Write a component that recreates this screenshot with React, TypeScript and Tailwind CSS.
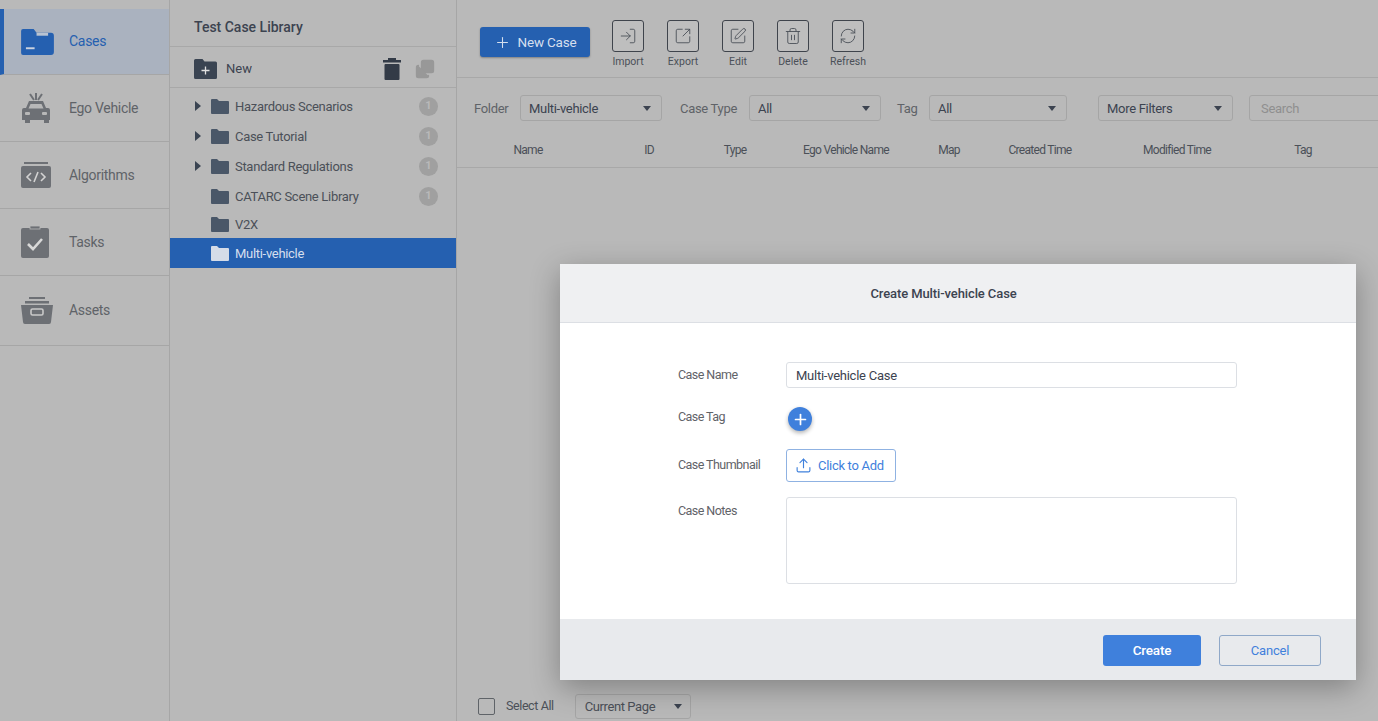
import { Copy, Plus, RefreshCw, SquareArrowOutUpRight, SquarePen, Trash2, Upload, LogIn } from 'lucide-react';
import type { ReactNode } from 'react';

const navItems: { label: string; icon: ReactNode; active?: boolean; height: string }[] = [
  {
    label: 'Cases',
    active: true,
    height: 'h-[66px]',
    icon: (
      <svg width="33" height="27" viewBox="0 0 34 28">
        <path d="M2 1h11l3 4h15a3 3 0 0 1 3 3v17a3 3 0 0 1-3 3H2a2 2 0 0 1-2-2V3a2 2 0 0 1 2-2z" fill="#2560b0" />
        <rect x="16" y="5" width="12" height="3" fill="#b9c3d2" />
        <rect x="5" y="20" width="9" height="2" fill="#c9d2df" />
      </svg>
    ),
  },
  {
    label: 'Ego Vehicle',
    height: 'h-[67px]',
    icon: (
      <svg width="30" height="32" viewBox="0 0 30 32" fill="#6d7075">
        <path d="M15 1v7M9 2l4 6M21 2l-4 6" stroke="#6d7075" strokeWidth="2" />
        <path d="M8 9h14l3 7h2a2 2 0 0 1 2 2v10h-1v3h-5v-3H9v3H4v-3H1V18a2 2 0 0 1 2-2h2z" />
        <path d="M9.5 12h11l2 4.5h-15z" fill="#b8b8b8" />
        <rect x="4" y="20" width="5" height="3" rx="1" fill="#b8b8b8" />
        <rect x="21" y="20" width="5" height="3" rx="1" fill="#b8b8b8" />
      </svg>
    ),
  },
  {
    label: 'Algorithms',
    height: 'h-[67px]',
    icon: (
      <svg width="30" height="26" viewBox="0 0 30 26" fill="#6d7075">
        <rect x="3" y="0" width="24" height="2" />
        <rect x="0" y="4" width="30" height="22" rx="2" />
        <path d="M10 11l-4 4 4 4M20 11l4 4-4 4M17 10l-4 10" fill="none" stroke="#d3d3d3" strokeWidth="1.6" />
      </svg>
    ),
  },
  {
    label: 'Tasks',
    height: 'h-[67px]',
    icon: (
      <svg width="28" height="32" viewBox="0 0 28 32" fill="#6d7075">
        <rect x="0" y="2" width="28" height="30" rx="2" />
        <rect x="9" y="0" width="10" height="3" fill="#6d7075" stroke="#b8b8b8" strokeWidth="0.8" />
        <path d="M7 18l5 5 9-10" fill="none" stroke="#d8d8d8" strokeWidth="2.6" />
      </svg>
    ),
  },
  {
    label: 'Assets',
    height: 'h-[70px]',
    icon: (
      <svg width="32" height="27" viewBox="0 0 32 27" fill="#6d7075">
        <rect x="8" y="0" width="16" height="2" />
        <rect x="4" y="4" width="24" height="2.5" />
        <path d="M0 8h32l-2 17a2 2 0 0 1-2 2H4a2 2 0 0 1-2-2z" />
        <rect x="10" y="12" width="12" height="6" rx="1.5" fill="none" stroke="#c9c9c9" strokeWidth="1.6" />
      </svg>
    ),
  },
];

const folders = [
  { name: 'Hazardous Scenarios', arrow: true, count: true, rowH: 'h-[30px]' },
  { name: 'Case Tutorial', arrow: true, count: true, rowH: 'h-[30px]' },
  { name: 'Standard Regulations', arrow: true, count: true, rowH: 'h-[30px]' },
  { name: 'CATARC Scene Library', arrow: false, count: true, rowH: 'h-[30px]' },
  { name: 'V2X', arrow: false, count: false, rowH: 'h-[27px]' },
  { name: 'Multi-vehicle', arrow: false, count: false, rowH: 'h-[30px]', selected: true },
];

const tools = [
  { label: 'Import', Icon: LogIn },
  { label: 'Export', Icon: SquareArrowOutUpRight },
  { label: 'Edit', Icon: SquarePen },
  { label: 'Delete', Icon: Trash2 },
  { label: 'Refresh', Icon: RefreshCw },
];

const columns = [
  { label: 'Name', w: 'w-[142px]' },
  { label: 'ID', w: 'w-[100px]' },
  { label: 'Type', w: 'w-[72px]' },
  { label: 'Ego Vehicle Name', w: 'w-[150px]' },
  { label: 'Map', w: 'w-[56px]' },
  { label: 'Created Time', w: 'w-[126px]' },
  { label: 'Modified Time', w: 'w-[148px]' },
  { label: 'Tag', w: 'w-[104px]' },
];

const Caret = ({ className = '' }: { className?: string }) => (
  <span className={`h-0 w-0 border-x-[4px] border-t-[5px] border-x-transparent border-t-[#3c4350] ${className}`} />
);

const FolderIcon = ({ color }: { color: string }) => (
  <svg width="18" height="15" viewBox="0 0 18 15" fill={color}>
    <path d="M1 0h5l2 2h9a1 1 0 0 1 1 1v11a1 1 0 0 1-1 1H1a1 1 0 0 1-1-1V1a1 1 0 0 1 1-1z" />
  </svg>
);

const Select = ({ value, width }: { value: string; width: string }) => (
  <div className={`flex h-[26px] ${width} shrink-0 items-center justify-between rounded-[3px] border border-[#a5a5a5] pl-[8px] pr-[10px] text-[13px] tracking-[-0.3px] text-[#3c4350]`}>
    <span className="pt-[1px]">{value}</span>
    <Caret />
  </div>
);

export default function App() {
  return (
    <div className="relative flex h-[721px] w-[1378px] overflow-hidden bg-[#b9b9b9] font-['Roboto',sans-serif] text-[#4b5058]">
      {/* Левое меню */}
      <aside className="w-[170px] shrink-0 border-r border-[#a6a6a6] pt-[9px]">
        {navItems.map((item) => (
          <div
            key={item.label}
            className={`flex ${item.height} items-center border-b border-[#a6a6a6] ${
              item.active ? 'border-l-[4px] border-l-[#2560b0] bg-[#aab2bf] pl-[17px] text-[#2560b0]' : 'pl-[21px] text-[#5f6368]'
            }`}
          >
            <div className="flex w-[48px] items-center justify-start">{item.icon}</div>
            <span className="text-[14px] tracking-[-0.3px]">{item.label}</span>
          </div>
        ))}
      </aside>

      {/* Дерево папок */}
      <section className="w-[287px] shrink-0 border-r border-[#a6a6a6]">
        <div className="flex h-[47px] items-center border-b border-[#a8a8a8] pb-[1px] pl-[24px] pt-[10px] text-[14px] font-medium text-[#3c4350]">
          Test Case Library
        </div>
        <div className="flex h-[41px] items-center border-b border-[#a8a8a8] pl-[24px] pr-[21px] pt-[3px]">
          <svg width="23" height="20" viewBox="0 0 23 20">
            <path d="M1.5 0h7l2 2.5H21.5A1.5 1.5 0 0 1 23 4v14.5a1.5 1.5 0 0 1-1.5 1.5h-20A1.5 1.5 0 0 1 0 18.5v-17A1.5 1.5 0 0 1 1.5 0z" fill="#3a4452" />
            <path d="M11.5 7.5v8M7.5 11.5h8" stroke="#e0e0e0" strokeWidth="1.3" />
          </svg>
          <span className="ml-[9px] text-[13px] text-[#3c4350]">New</span>
          <svg className="ml-auto" width="18" height="22" viewBox="0 0 18 22" fill="#333b47">
            <rect x="0" y="2" width="18" height="2.5" />
            <rect x="5" y="0" width="8" height="2" />
            <rect x="1.5" y="6" width="15" height="16" rx="1" />
          </svg>
          <Copy size={20} color="#989898" fill="#989898" className="ml-[14px] -scale-x-100 -scale-y-100 rotate-90" />
        </div>
        <div className="pt-[3px]">
          {folders.map((f) => (
            <div
              key={f.name}
              className={`flex items-center ${f.rowH} ${f.selected ? 'bg-[#2560b0] text-[#d5dfee]' : 'text-[#4b5058]'}`}
            >
              <span className="flex w-[41px] shrink-0 justify-end pr-[10px]">
                {f.arrow && <span className="h-0 w-0 border-y-[5px] border-l-[6px] border-y-transparent border-l-[#3a4452]" />}
              </span>
              <FolderIcon color={f.selected ? '#d5dce8' : '#4a5768'} />
              <span className="ml-[6px] pt-[1px] text-[13px] tracking-[-0.3px]">{f.name}</span>
              {f.count && (
                <span className="ml-auto mr-[18px] flex h-[19px] w-[19px] items-center justify-center rounded-full bg-[#a0a0a0] text-[11px] font-bold text-[#b9b9b9]">
                  1
                </span>
              )}
            </div>
          ))}
        </div>
      </section>

      {/* Основная область */}
      <main className="min-w-0 flex-1">
        <div className="flex h-[78px] items-start border-b border-[#a8a8a8] pl-[23px]">
          <button className="mt-[27px] flex h-[30px] w-[110px] items-center justify-center gap-[7px] rounded-[3px] bg-[#2560b0] text-[13.5px] tracking-[-0.2px] text-[#d5dfee] shadow-[0_1px_2px_rgba(0,0,0,0.3)]">
            <Plus size={17} strokeWidth={1.5} />
            New Case
          </button>
          <div className="ml-[22px] mt-[20px] flex gap-[23px]">
            {tools.map(({ label, Icon }) => (
              <div key={label} className="flex w-[32px] flex-col items-center">
                <span className="flex h-[32px] w-[32px] items-center justify-center rounded-[3px] border border-[#3f444c] bg-[#bebebe]">
                  <Icon size={18} strokeWidth={1.2} color="#4b5058" />
                </span>
                <span className="mt-[2px] whitespace-nowrap text-[10.5px] text-[#4b5058]">{label}</span>
              </div>
            ))}
          </div>
        </div>

        <div className="flex h-[60px] items-center whitespace-nowrap pl-[17px] text-[13px] tracking-[-0.3px] text-[#5f6368]">
          <span className="w-[46px] shrink-0 pt-[1px]">Folder</span>
          <Select value="Multi-vehicle" width="w-[142px]" />
          <span className="ml-[18px] w-[69px] shrink-0 pt-[1px]">Case Type</span>
          <Select value="All" width="w-[132px]" />
          <span className="ml-[16px] w-[32px] shrink-0 pt-[1px]">Tag</span>
          <Select value="All" width="w-[138px]" />
          <span className="ml-[31px]"><Select value="More Filters" width="w-[135px]" /></span>
          <div className="ml-[16px] flex h-[26px] w-[140px] shrink-0 items-center rounded-l-[3px] border border-[#a5a5a5] pl-[11px] pt-[1px] text-[#8f8f8f]">
            Search
          </div>
        </div>

        <div className="flex h-[30px] items-start border-b border-[#a8a8a8] text-[12px] tracking-[-0.7px] text-[#4b5058]">
          {columns.map((c) => (
            <span key={c.label} className={`${c.w} shrink-0 pt-[3px] text-center`}>{c.label}</span>
          ))}
        </div>
      </main>

      {/* Нижняя панель */}
      <div className="absolute left-[478px] top-[694px] flex items-center text-[12.5px] tracking-[-0.4px] text-[#4b5058]">
        <span className="h-[17px] w-[17px] rounded-[2px] border border-[#5f6368]" />
        <span className="ml-[11px]">Select All</span>
        <div className="ml-[21px] flex h-[25px] w-[116px] items-center justify-between rounded-[3px] border border-[#a5a5a5] pl-[9px] pr-[8px] text-[13px]">
          Current Page
          <Caret />
        </div>
      </div>

      {/* Модальное окно */}
      <div className="absolute left-[560px] top-[264px] flex h-[416px] w-[796px] flex-col rounded-[2px] bg-white shadow-[0_8px_30px_rgba(0,0,0,0.3)]">
        <div className="flex h-[59px] items-center justify-center border-b border-[#dcdfe4] bg-[#eff0f2] pr-[29px] pt-[1px] text-[13px] font-medium tracking-[-0.1px] text-[#3c4350]">
          Create Multi-vehicle Case
        </div>
        <div className="flex-1 pl-[118px] pt-[39px] text-[12.5px] tracking-[-0.55px] text-[#5f6368]">
          <div className="flex h-[26px] items-center">
            <span className="w-[108px]">Case Name</span>
            <div className="flex h-[26px] w-[451px] items-center rounded-[3px] border border-[#dcdfe4] pl-[9px] pt-[2px] text-[13px] tracking-[-0.25px] text-[#3c4350]">
              Multi-vehicle Case
            </div>
          </div>
          <div className="mt-[19px] flex h-[24px] items-center">
            <span className="w-[108px] pb-[4px]">Case Tag</span>
            <span className="ml-[2px] flex h-[24px] w-[24px] items-center justify-center rounded-full bg-[#3f80dc] shadow-[0_2px_4px_rgba(0,0,0,0.3)]">
              <Plus size={17} color="#fff" strokeWidth={2.4} />
            </span>
          </div>
          <div className="mt-[18px] flex h-[33px] items-center">
            <span className="w-[108px]">Case Thumbnail</span>
            <div className="flex h-[33px] w-[110px] items-center gap-[6px] rounded-[3px] border border-[#8fb2e2] pl-[8px] text-[13px] tracking-[-0.3px] text-[#3f80dc]">
              <Upload size={17} strokeWidth={1.6} />
              Click to Add
            </div>
          </div>
          <div className="mt-[15px] flex items-start">
            <span className="w-[108px] pt-[5px]">Case Notes</span>
            <div className="h-[87px] w-[451px] rounded-[3px] border border-[#dcdfe4]" />
          </div>
        </div>
        <div className="flex h-[61px] items-center justify-end gap-[18px] bg-[#e8eaed] pr-[35px] pt-[2px]">
          <button className="h-[31px] w-[98px] rounded-[3px] bg-[#3f80dc] text-[13.5px] font-medium tracking-[-0.2px] text-white">Create</button>
          <button className="h-[31px] w-[102px] rounded-[3px] border border-[#8fa8c8] text-[13px] tracking-[-0.2px] text-[#3f80dc]">Cancel</button>
        </div>
      </div>
    </div>
  );
}
